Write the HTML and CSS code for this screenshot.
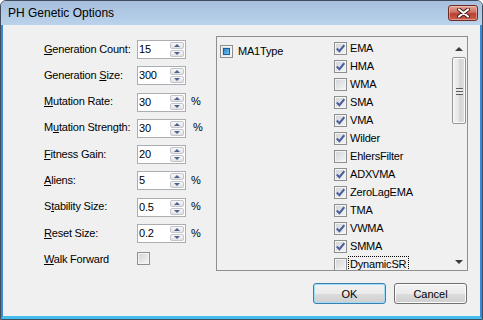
FILE: index.html
```html
<!DOCTYPE html>
<html lang="en">
<head>
    <meta charset="UTF-8">
    <title>PH Genetic Options</title>
    <link rel="stylesheet" href="styles.css">
</head>
<body>

<div class="window">
    <div class="titlebar">
        <span class="title">PH Genetic Options</span>
        <div class="close">
            <svg width="13" height="10" viewBox="0 0 13 10">
                <path d="M2 1.5 L11 8.5 M11 1.5 L2 8.5" stroke="#4a1c16" stroke-width="4" stroke-linecap="round"/>
                <path d="M2 1.5 L11 8.5 M11 1.5 L2 8.5" stroke="#ffffff" stroke-width="2.2" stroke-linecap="round"/>
            </svg>
        </div>
    </div>

    <div class="client">
        <div class="body">
            <div class="form">
                <label><u>G</u>eneration Count:</label>
                <div class="num"><span class="val">15</span><div class="spin"><span class="up"></span><span class="down"></span></div></div>
                <span></span>

                <label>Generation <u>S</u>ize:</label>
                <div class="num"><span class="val">300</span><div class="spin"><span class="up"></span><span class="down"></span></div></div>
                <span></span>

                <label><u>M</u>utation Rate:</label>
                <div class="num"><span class="val">30</span><div class="spin"><span class="up"></span><span class="down"></span></div></div>
                <span class="pct">%</span>

                <label>M<u>u</u>tation Strength:</label>
                <div class="num"><span class="val">30</span><div class="spin"><span class="up"></span><span class="down"></span></div></div>
                <span class="pct wide">%</span>

                <label><u>F</u>itness Gain:</label>
                <div class="num"><span class="val">20</span><div class="spin"><span class="up"></span><span class="down"></span></div></div>
                <span></span>

                <label><u>A</u>liens:</label>
                <div class="num"><span class="val">5</span><div class="spin"><span class="up"></span><span class="down"></span></div></div>
                <span class="pct">%</span>

                <label>S<u>t</u>ability Size:</label>
                <div class="num"><span class="val">0.5</span><div class="spin"><span class="up"></span><span class="down"></span></div></div>
                <span class="pct">%</span>

                <label><u>R</u>eset Size:</label>
                <div class="num"><span class="val">0.2</span><div class="spin"><span class="up"></span><span class="down"></span></div></div>
                <span class="pct">%</span>

                <label><u>W</u>alk Forward</label>
                <div><span class="cb"></span></div>
                <span></span>
            </div>

            <div class="panel">
                <div class="tree">
                    <div class="item"><span class="cb mixed"><i></i></span>MA1Type</div>
                </div>
                <div class="list">
                    <div class="item"><span class="cb"><svg width="9" height="9" viewBox="0 0 9 9"><path d="M0.8 4.6 L3.4 7.2 L8.3 1.2" fill="none" stroke="#4b5f9e" stroke-width="2.1"/></svg></span>EMA</div>
                    <div class="item"><span class="cb"><svg width="9" height="9" viewBox="0 0 9 9"><path d="M0.8 4.6 L3.4 7.2 L8.3 1.2" fill="none" stroke="#4b5f9e" stroke-width="2.1"/></svg></span>HMA</div>
                    <div class="item"><span class="cb"></span>WMA</div>
                    <div class="item"><span class="cb"><svg width="9" height="9" viewBox="0 0 9 9"><path d="M0.8 4.6 L3.4 7.2 L8.3 1.2" fill="none" stroke="#4b5f9e" stroke-width="2.1"/></svg></span>SMA</div>
                    <div class="item"><span class="cb"><svg width="9" height="9" viewBox="0 0 9 9"><path d="M0.8 4.6 L3.4 7.2 L8.3 1.2" fill="none" stroke="#4b5f9e" stroke-width="2.1"/></svg></span>VMA</div>
                    <div class="item"><span class="cb"><svg width="9" height="9" viewBox="0 0 9 9"><path d="M0.8 4.6 L3.4 7.2 L8.3 1.2" fill="none" stroke="#4b5f9e" stroke-width="2.1"/></svg></span>Wilder</div>
                    <div class="item"><span class="cb"></span>EhlersFilter</div>
                    <div class="item"><span class="cb"><svg width="9" height="9" viewBox="0 0 9 9"><path d="M0.8 4.6 L3.4 7.2 L8.3 1.2" fill="none" stroke="#4b5f9e" stroke-width="2.1"/></svg></span>ADXVMA</div>
                    <div class="item"><span class="cb"><svg width="9" height="9" viewBox="0 0 9 9"><path d="M0.8 4.6 L3.4 7.2 L8.3 1.2" fill="none" stroke="#4b5f9e" stroke-width="2.1"/></svg></span>ZeroLagEMA</div>
                    <div class="item"><span class="cb"><svg width="9" height="9" viewBox="0 0 9 9"><path d="M0.8 4.6 L3.4 7.2 L8.3 1.2" fill="none" stroke="#4b5f9e" stroke-width="2.1"/></svg></span>TMA</div>
                    <div class="item"><span class="cb"><svg width="9" height="9" viewBox="0 0 9 9"><path d="M0.8 4.6 L3.4 7.2 L8.3 1.2" fill="none" stroke="#4b5f9e" stroke-width="2.1"/></svg></span>VWMA</div>
                    <div class="item"><span class="cb"><svg width="9" height="9" viewBox="0 0 9 9"><path d="M0.8 4.6 L3.4 7.2 L8.3 1.2" fill="none" stroke="#4b5f9e" stroke-width="2.1"/></svg></span>SMMA</div>
                    <div class="item"><span class="cb"></span><span class="focus">DynamicSR</span></div>
                </div>
                <div class="scroll">
                    <div class="sbtn"><span class="tri-up"></span></div>
                    <div class="track">
                        <div class="thumb"><span class="grip"></span></div>
                    </div>
                    <div class="sbtn"><span class="tri-down"></span></div>
                </div>
            </div>
        </div>

        <div class="actions">
            <button class="btn default">OK</button>
            <button class="btn">Cancel</button>
        </div>
    </div>
</div>

</body>
</html>
```

FILE: styles.css
```css
* {
    margin: 0;
    padding: 0;
    box-sizing: border-box;
}

body {
    width: 483px;
    height: 320px;
    overflow: hidden;
    font-family: "Liberation Sans", Arial, sans-serif;
    font-size: 11px;
    color: #000;
}

.window {
    width: 483px;
    height: 320px;
    border: 1px solid #3f4d5d;
    border-radius: 6px 6px 0 0;
    background: #bcd3eb;
    display: flex;
    flex-direction: column;
    overflow: hidden;
}

.titlebar {
    height: 24px;
    display: flex;
    align-items: center;
    justify-content: space-between;
    padding: 0 4px 0 7px;
    background: linear-gradient(#a6bfdc, #bad2eb);
}

.title {
    font-size: 12px;
}

.close {
    width: 30px;
    height: 16px;
    border: 1px solid #6e2b24;
    border-radius: 3px;
    background: linear-gradient(#e3a598 0%, #cf6f60 45%, #b93f30 55%, #c9604f 100%);
    box-shadow: inset 0 0 0 1px rgba(255, 220, 210, 0.45);
    display: flex;
    align-items: center;
    justify-content: center;
}

.client {
    flex: 1;
    background: #f0f0f0;
    border-left: 2px solid #3c87d7;
    border-right: 2px solid #3c87d7;
    border-bottom: 3px solid #42bdee;
}

.body {
    display: flex;
    justify-content: space-between;
    padding: 11px 12px 0 41px;
}

/* left form */
.form {
    margin-top: 4px;
    display: grid;
    grid-template-columns: 93px 49px 20px;
    grid-auto-rows: 19px;
    row-gap: 7.3px;
    align-items: center;
    letter-spacing: -0.2px;
}

.form label {
    margin-top: -2px;
}

.num {
    display: flex;
    height: 19px;
    border: 1px solid #abadb3;
    background: #fff;
}

.num .val {
    flex: 1;
    padding-left: 1px;
    line-height: 17px;
}

.spin {
    width: 15px;
    display: flex;
    flex-direction: column;
    gap: 1px;
    padding: 1px 1px 1px 0;
}

.spin span {
    flex: 1;
    border: 1px solid #c2c6cc;
    border-radius: 2px;
    background: linear-gradient(#f7f7f7, #e2e2e2);
    display: flex;
    align-items: center;
    justify-content: center;
}

.spin .up::after {
    content: "";
    border-left: 3px solid transparent;
    border-right: 3px solid transparent;
    border-bottom: 3px solid #4d6090;
}

.spin .down::after {
    content: "";
    border-left: 3px solid transparent;
    border-right: 3px solid transparent;
    border-top: 3px solid #4d6090;
}

.pct {
    padding-left: 5px;
    margin-top: -2px;
}

.pct.wide {
    padding-left: 7px;
}

/* checkboxes */
.cb {
    width: 13px;
    height: 13px;
    border: 1px solid #8e8f8f;
    background: linear-gradient(135deg, #cfd2d6, #f7f7f7);
    box-shadow: inset 0 0 0 1px #f4f4f4;
    display: inline-flex;
    align-items: center;
    justify-content: center;
    flex-shrink: 0;
}

.cb.mixed i {
    width: 7px;
    height: 7px;
    border: 1px solid #1f5f9c;
    background: linear-gradient(135deg, #2c84c8, #6ac7ee);
}

/* right panel */
.panel {
    width: 252px;
    height: 235px;
    border: 1px solid #8e8f8f;
    display: flex;
    padding-top: 3px;
}

.tree {
    width: 117px;
    padding: 2px 0 0 3px;
}

.tree .item {
    gap: 5px;
}

.item {
    height: 18px;
    display: flex;
    align-items: center;
    gap: 3px;
    white-space: nowrap;
    letter-spacing: -0.2px;
}

.list {
    flex: 1;
    overflow: hidden;
    margin-top: -1px;
}

.focus {
    outline: 1px dotted #000;
    outline-offset: 0;
    padding: 0 2px 0 1px;
    margin-left: -1px;
    line-height: 15px;
}

.scroll {
    width: 17px;
    display: flex;
    flex-direction: column;
}

.sbtn {
    height: 17px;
    display: flex;
    align-items: center;
    justify-content: center;
}

.tri-up {
    border-left: 4px solid transparent;
    border-right: 4px solid transparent;
    border-bottom: 4px solid #3b3b3b;
    margin-top: 1px;
}

.tri-down {
    border-left: 4px solid transparent;
    border-right: 4px solid transparent;
    border-top: 4px solid #3b3b3b;
}

.track {
    flex: 1;
    padding: 0 1px 0 2px;
}

.thumb {
    height: 67px;
    border: 1px solid #959595;
    border-radius: 2px;
    background: linear-gradient(90deg, #f3f3f3, #e6e6e6 50%, #d5d5d5 51%, #dedede);
    box-shadow: inset 0 0 0 1px #fafafa;
    display: flex;
    align-items: center;
    justify-content: center;
}

.grip {
    width: 7px;
    height: 7px;
    margin-top: 1px;
    background: repeating-linear-gradient(#5d5d5d 0, #5d5d5d 1px, #e8e8e8 1px, #e8e8e8 3px);
}

/* buttons */
.actions {
    display: flex;
    justify-content: flex-end;
    gap: 8px;
    padding: 12px 13px 0 0;
}

.btn {
    width: 73px;
    height: 21px;
    border: 1px solid #707070;
    border-radius: 3px;
    background: linear-gradient(#f2f2f2 0%, #ebebeb 50%, #dddddd 51%, #cfcfcf 100%);
    box-shadow: inset 0 0 0 1px #fcfcfc;
    font-family: "Liberation Sans", Arial, sans-serif;
    font-size: 11px;
    color: #000;
}

.btn.default {
    border-color: #3c7fb1;
    box-shadow: inset 0 0 0 1px #9fdcf7;
}
```
